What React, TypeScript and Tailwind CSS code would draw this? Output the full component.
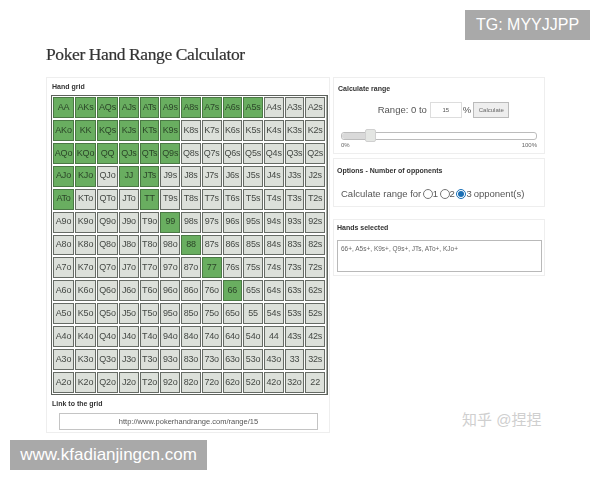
import { useState } from 'react';
import clsx from 'clsx';

const RANKS = ['A', 'K', 'Q', 'J', 'T', '9', '8', '7', '6', '5', '4', '3', '2'];

// 66+, A5s+, K9s+, Q9s+, JTs, ATo+, KJo+
const SELECTED = [
  'AA', 'KK', 'QQ', 'JJ', 'TT', '99', '88', '77', '66',
  'AKs', 'AQs', 'AJs', 'ATs', 'A9s', 'A8s', 'A7s', 'A6s', 'A5s',
  'KQs', 'KJs', 'KTs', 'K9s', 'QJs', 'QTs', 'Q9s', 'JTs',
  'AKo', 'AQo', 'AJo', 'ATo', 'KQo', 'KJo',
];

function handName(row: number, col: number) {
  if (row === col) return RANKS[row] + RANKS[row];
  if (row < col) return RANKS[row] + RANKS[col] + 's';
  return RANKS[col] + RANKS[row] + 'o';
}

function HandGrid() {
  return (
    <div className="grid grid-cols-[21px_21px_21px_repeat(10,minmax(0,1fr))] gap-x-[1px] gap-y-[2px] bg-[#a9ada7] border border-[#5d625c] px-[1.5px] py-[1px] h-[300px] w-[277px] ml-[3.5px]">
      {RANKS.map((_, row) =>
        RANKS.map((_, col) => {
          const hand = handName(row, col);
          const active = SELECTED.includes(hand);
          return (
            <div
              key={hand}
              className={clsx(
                'flex items-center justify-center text-[9px] tracking-[-0.2px] border-[1.5px] outline outline-[0.5px] outline-white',
                active
                  ? 'bg-[#69ae60] border-[#4a7844] text-[#2b4528]'
                  : 'bg-[#dcE0da] border-[#666b65] text-[#444844]'
              )}
            >
              {hand}
            </div>
          );
        })
      )}
    </div>
  );
}

function CardTitle({ children }: { children: string }) {
  return <p className="text-[7px] font-bold text-[#333]">{children}</p>;
}

export default function App() {
  const [opponents, setOpponents] = useState(3);

  return (
    <div className="relative w-[600px] h-[480px] overflow-hidden bg-white font-['Liberation_Sans',sans-serif]">
      <div className="px-[46px] pt-[44px] blur-[0.3px]">
        <h1 className="font-['Liberation_Serif',serif] font-medium text-[17.5px] leading-[20px] tracking-[-0.4px] text-[#333] [-webkit-text-stroke:0.2px_#333] mb-[13px]">
          Poker Hand Range Calculator
        </h1>

        <div className="flex gap-[3px] items-start">
          {/* left column */}
          <div className="w-[284px] h-[356px] border border-[#eeeeee] flex flex-col">
            <div className="px-[5px] pt-[4px] pb-[3px] leading-[10px]">
              <CardTitle>Hand grid</CardTitle>
            </div>
            <HandGrid />
            <div className="px-[5px] pt-[4px] leading-[10px]">
              <CardTitle>Link to the grid</CardTitle>
            </div>
            <input
              readOnly
              value="http://www.pokerhandrange.com/range/15"
              className="mx-[12px] mt-[4px] h-[17px] w-[259px] border border-[#c4c4c4] text-center text-[7.5px] text-[#555] outline-none"
            />
          </div>

          {/* right column */}
          <div className="w-[212px] flex flex-col">
            <div className="h-[77px] border border-[#eeeeee] px-[4px] pt-[6px]">
              <CardTitle>Calculate range</CardTitle>
              <div className="flex items-center justify-center mt-[7px] h-[17px] pl-[9px] text-[#555] text-[9.5px]">
                <span className="mr-[3px]">Range: 0 to</span>
                <input
                  readOnly
                  value="15"
                  className="w-[32px] h-[16px] border border-[#dddddd] text-center text-[6px] text-[#555] outline-none"
                />
                <span className="ml-[1px] mr-[2px]">%</span>
                <button className="w-[36px] h-[16px] border border-[#bbbbbb] bg-[#eeeeee] text-[6px] text-[#666]">
                  Calculate
                </button>
              </div>
              <div className="relative mx-[3px] mt-[13px] h-[8px] rounded-[3px] border border-[#bcbcbc] overflow-visible">
                <div className="h-full w-[23px] bg-[#d9d9d9] rounded-l-[3px]" />
                <div className="absolute left-[23px] top-[-4px] w-[11px] h-[13px] rounded-[2px] bg-[#e4e6e3] border border-[#d0d0d0]" />
              </div>
              <div className="flex justify-between mx-[3px] mt-[1px] text-[6px] leading-[8px] text-[#666]">
                <span>0%</span>
                <span>100%</span>
              </div>
            </div>

            <div className="h-[49px] mt-[4px] border border-[#eeeeee] px-[3px] pt-[7px]">
              <CardTitle>Options - Number of opponents</CardTitle>
              <div className="flex items-center mt-[10px] ml-[4px] text-[9.5px] text-[#555]">
                <span>Calculate range for</span>
                {[1, 2, 3].map((n) => (
                  <label key={n} className="flex items-center">
                    <input
                      type="radio"
                      name="opponents"
                      checked={opponents === n}
                      onChange={() => setOpponents(n)}
                      className="w-[10px] h-[10px] ml-[1.5px] mr-0 accent-[#1a6fb5]"
                    />
                    <span>{n}</span>
                  </label>
                ))}
                <span className="ml-[2px]">opponent(s)</span>
              </div>
            </div>

            <div className="h-[57px] mt-[12px] border border-[#eeeeee] px-[3px] pt-[3px]">
              <CardTitle>Hands selected</CardTitle>
              <textarea
                readOnly
                value="66+, A5s+, K9s+, Q9s+, JTs, ATo+, KJo+"
                className="block mt-[6px] ml-[0px] w-[205px] h-[32px] resize-none border border-[#b9b9b9] px-[3px] py-[4px] text-[6.5px] leading-[8px] text-[#666] outline-none"
              />
            </div>
          </div>
        </div>
      </div>

      {/* watermarks */}
      <div className="absolute left-[465px] top-[10px] w-[125px] h-[30px] bg-[#a9a9a9] flex items-center justify-center text-white text-[16px]">
        TG: MYYJJPP
      </div>
      <div className="absolute left-[10px] top-[440px] w-[197px] h-[30px] bg-[#a9a9a9] flex items-center justify-center text-white text-[17px]">
        www.kfadianjingcn.com
      </div>
      <div className="absolute left-[462px] top-[412px] text-[15px] leading-[16px] text-[#cfcfcf] font-['Liberation_Sans','Noto_Sans_CJK_SC',sans-serif]">
        知乎 @捏捏
      </div>
    </div>
  );
}
